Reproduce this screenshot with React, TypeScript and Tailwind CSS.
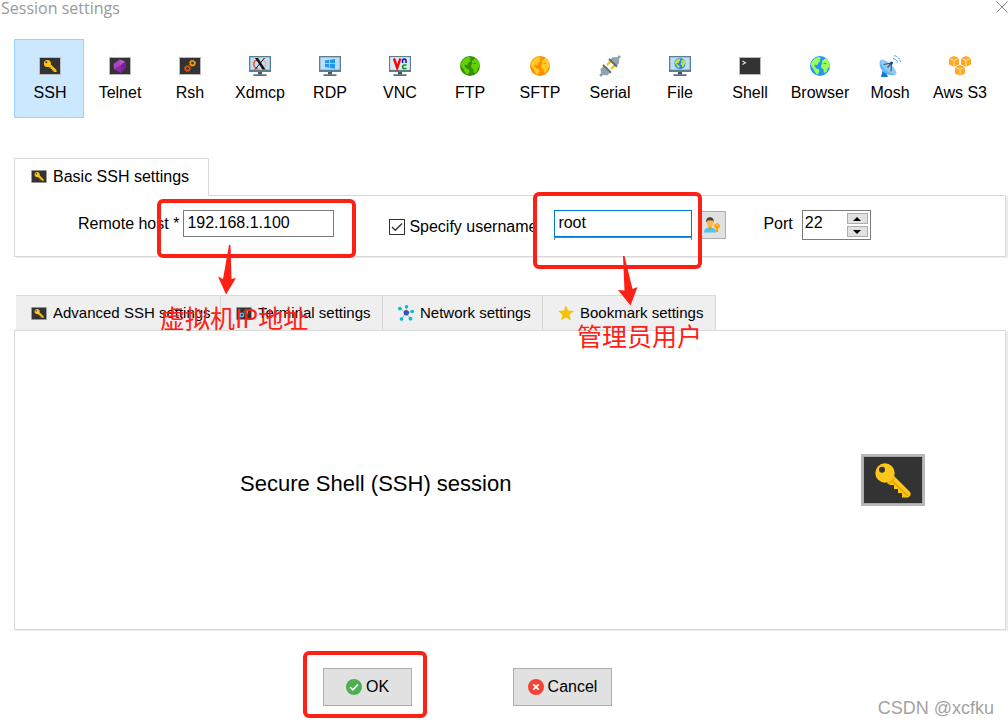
import { useState } from 'react';
import type { ReactNode } from 'react';
import { clsx } from 'clsx';

function Screen({ children, className }: { children?: ReactNode; className?: string }) {
  return (
    <svg viewBox="0 0 22 18" className={clsx('shrink-0', className)} aria-hidden="true">
      <rect width="22" height="18" fill="#b9b9b9" />
      <rect x="1" y="1" width="20" height="16" fill="#333" />
      {children}
    </svg>
  );
}

function KeyIcon({ className }: { className?: string }) {
  return (
    <Screen className={className}>
      <path d="M9 9.200 11.400 7 17.500 13V15H14.600V13.500H13.100V12H11.600V10.600H10.200Z" fill="#ffc61a" />
      <path d="m10.600 8.400 5.800 5.600" stroke="#e8a200" strokeWidth=".6" />
      <circle cx="8.400" cy="6.400" r="3.500" fill="#ffc61a" />
      <circle cx="7.300" cy="5.300" r="1" fill="#333" />
    </Screen>
  );
}

function Gear({ x, y, color }: { x: number; y: number; color: string }) {
  return (
    <g stroke={color} fill="none">
      <circle cx={x} cy={y} r="2.1" strokeWidth="1.5" />
      <circle cx={x} cy={y} r="3.1" strokeWidth="1" strokeDasharray="1.3 1.13" />
    </g>
  );
}

function Monitor({ children }: { children: ReactNode }) {
  return (
    <svg viewBox="0 0 22 20" className="h-5 w-[22px]" aria-hidden="true">
      <path d="M0 0h22v16H0z" fill="#607d8b" />
      <path d="M1.3 1.3h19.4v12.4H1.3z" fill="#bbdefb" />
      <path d="M9 16h4v2.5H9z" fill="#455a64" />
      <path d="M4.5 18.3h13V20h-13z" fill="#546e7a" />
      {children}
    </svg>
  );
}

function GlobeShape({ sea, land }: { sea: string; land: string }) {
  return (
    <>
      <circle cx="10" cy="10" r="10" fill={sea} />
      <path
        d="M1 8C2 4.500 5 1.600 9 1L11 2 9.500 3.500 10.500 5 8.500 6.500 7.500 9 6 9.300 5 8 4.500 10.500 6.500 12.500 9 13.500 9.500 15.500 8 18 6.500 18.500 5 16 3.500 13 1.300 10.500Z"
        fill={land}
      />
      <path
        d="M12.500 4.500 14.500 3 15.800 2.300C18 3.800 19.600 6.500 19.800 9.200L19.500 12 17.800 11.500 17.500 14 15.500 17 13.800 16.500 13.500 13.200 11.500 12 11 9.500 12.500 7.500 11.700 6Z"
        fill={land}
      />
      <path d="m13 7.500 2-.8 1.500.8-1.500.7Z" fill={sea} />
    </>
  );
}

function Globe({ sea, land }: { sea: string; land: string }) {
  return (
    <svg viewBox="0 0 20 20" className="size-5" aria-hidden="true">
      <GlobeShape sea={sea} land={land} />
    </svg>
  );
}

function SerialIcon() {
  return (
    <svg viewBox="0 0 22 22" className="size-[22px]" aria-hidden="true">
      <path d="m8 10 4-4M12 14l4-4" stroke="#ffb300" strokeWidth="1.8" />
      <path d="m11 4.500 3-2.500 4 .2L20 0l2 1.800-2 2.200.2 4L17.500 11Z" fill="#90a4ae" />
      <path d="m4 11.500 6.800 6.500L8 20.500l-4-.5L2 22 .2 20.300 2 18 1.500 14Z" fill="#90a4ae" />
      <path d="m10 4 8 7.800M4 10l8 7.800" stroke="#546e7a" strokeWidth="2" />
    </svg>
  );
}

function DishIcon() {
  return (
    <svg viewBox="0 0 22 22" className="size-[22px]" aria-hidden="true">
      <path d="m3.500 16-1.500 6h7l-2-5Z" fill="#1976d2" />
      <path d="M1.500 5C-.5 8.500 1 14 4.500 17s9 4.500 12.500 2Z" fill="#64b5f6" />
      <path d="M1.500 5c2-1.500 7 1 10.500 4.500S18.500 17.500 17 19C14 20 9 17.500 6 14.500S.5 7.500 1.500 5Z" fill="#90caf9" />
      <path d="m4.500 9.500 8-1.500-.5 8.500M12.500 8 8.500 12.500" stroke="#455a64" strokeWidth="1.200" fill="none" />
      <circle cx="12.500" cy="8" r="1.500" fill="#0d47a1" />
      <path
        d="M14 3.500c2.500.3 4.300 2 4.500 4.500M15 .7c3.500.3 6.200 3 6.500 6.500"
        stroke="#42a5f5"
        strokeWidth="1"
        fill="none"
        strokeDasharray="3 .7"
      />
    </svg>
  );
}

function Cube({ x, y }: { x: number; y: number }) {
  return (
    <g transform={`translate(${x} ${y})`}>
      <path d="m5 0 5 2v6.500L5 10.800 0 8.500V2Z" fill="#ffa726" />
      <path d="m0 2.300 5 2 5-2M5 4.300v6" stroke="#fff3d6" strokeWidth=".8" fill="none" />
    </g>
  );
}

type Protocol = { name: string; icon: ReactNode };

const protocols: Protocol[] = [
  { name: 'SSH', icon: <KeyIcon className="h-[18px] w-[22px]" /> },
  {
    name: 'Telnet',
    icon: (
      <Screen className="h-[18px] w-[22px]">
        <path d="m10.500 2.500 5.500 2 1.200 5-5.200 6.300L5 12 4.500 7Z" fill="#ab47bc" />
        <path d="m10.500 2.500 5.500 2-4.500 3.700Z" fill="#ba55cc" />
        <path d="m11.500 8.200 4.500-3.700 1.200 5-5.200 6.300Z" fill="#7b1fa2" />
        <path d="M5 12l6.500-3.800.5 7.600Z" fill="#8e24aa" />
      </Screen>
    ),
  },
  {
    name: 'Rsh',
    icon: (
      <Screen className="h-[18px] w-[22px]">
        <Gear x={8.5} y={11.5} color="#e65100" />
        <Gear x={13.5} y={6.2} color="#ff9800" />
      </Screen>
    ),
  },
  {
    name: 'Xdmcp',
    icon: (
      <Monitor>
        <path d="M8 4C3.500 5.500 3.500 12 9 12.800" stroke="#ff5722" strokeWidth="1.500" fill="none" />
        <path d="M14.500 4.500C18.500 6.500 17.500 12 11.500 13" stroke="#ffab91" strokeWidth="1.500" fill="none" />
        <path d="M6 2h3L16.500 13.500h-3Z" fill="#111" />
        <path d="M15.500 2 6 13.500" stroke="#111" strokeWidth="1" />
      </Monitor>
    ),
  },
  {
    name: 'RDP',
    icon: (
      <Monitor>
        <path d="m6 4.500 4-.7v3.500H6ZM10.700 3.700 16 3v4.300h-5.300ZM6 8h4v3.800l-4-.7ZM10.700 8H16v4.700l-5.300-.8Z" fill="#2196f3" />
      </Monitor>
    ),
  },
  {
    name: 'VNC',
    icon: (
      <Monitor>
        <path d="M1.300 1.300h19.400v12.400H1.300z" fill="#dcebfa" />
        <path d="M5 2.500 8.200 12 11.300 2.500" stroke="#f00" strokeWidth="2.400" fill="none" />
        <path d="M13.500 7V5q0-2 1.800-2T17 5v2" stroke="#00e" strokeWidth="1.500" fill="none" />
        <path d="M17.500 9h-2q-2 0-2 1.800t2 1.800h2" stroke="#090" strokeWidth="1.500" fill="none" />
      </Monitor>
    ),
  },
  { name: 'FTP', icon: <Globe sea="#388e00" land="#5fd400" /> },
  { name: 'SFTP', icon: <Globe sea="#ff8f00" land="#ffca28" /> },
  { name: 'Serial', icon: <SerialIcon /> },
  {
    name: 'File',
    icon: (
      <Monitor>
        <g transform="translate(5.500 2) scale(.55)">
          <GlobeShape sea="#1e88e5" land="#cddc39" />
        </g>
      </Monitor>
    ),
  },
  {
    name: 'Shell',
    icon: (
      <Screen className="h-[18px] w-[22px]">
        <path d="m3.500 4 3 1.800-3 1.800" stroke="#ddd" strokeWidth="1.200" fill="none" />
      </Screen>
    ),
  },
  { name: 'Browser', icon: <Globe sea="#2196f3" land="#9cff57" /> },
  { name: 'Mosh', icon: <DishIcon /> },
  {
    name: 'Aws S3',
    icon: (
      <svg viewBox="0 0 22 20" className="h-5 w-[22px]" aria-hidden="true">
        <Cube x={0} y={0} />
        <Cube x={12} y={0} />
        <Cube x={6} y={9} />
      </svg>
    ),
  },
];

function TerminalIcon() {
  return (
    <Screen className="h-[13px] w-4">
      <g stroke="#64b5f6" fill="none">
        <circle cx="8" cy="11" r="2.500" strokeWidth="2" />
        <circle cx="14" cy="7" r="2" strokeWidth="1.500" />
      </g>
    </Screen>
  );
}

function NetworkIcon() {
  return (
    <svg viewBox="0 0 16 16" className="size-4" aria-hidden="true">
      <path d="M8 8 2 3.500M8 8l.5-6M8 8l6-1.500M8 8l4 5.500M8 8l-4.500 6" stroke="#b0bec5" strokeWidth="1" />
      <circle cx="8.300" cy="7.800" r="2.700" fill="#3f51b5" />
      <g fill="#00bcd4">
        <circle cx="1.900" cy="3.600" r="1.900" />
        <circle cx="8.500" cy="1.800" r="1.800" />
        <circle cx="14.200" cy="6.500" r="1.800" />
        <circle cx="12.500" cy="13.700" r="1.900" />
        <circle cx="3.500" cy="14.100" r="1.800" />
      </g>
    </svg>
  );
}

function StarIcon() {
  return (
    <svg viewBox="0 0 16 16" className="size-4" aria-hidden="true">
      <path d="m8 .3 2.200 5.200 5.600.5-4.200 3.800 1.300 5.600L8 12.400l-4.900 3 1.300-5.600L.2 6l5.600-.5Z" fill="#f4c20d" />
    </svg>
  );
}

function UserKeyIcon() {
  return (
    <svg viewBox="0 0 16 16" className="size-4" aria-hidden="true">
      <path d="M0 15.500C0 12 2.500 10.700 6 10.500s6 1.500 6 5Z" fill="#4fc3f7" />
      <path d="M4.500 8.500h3v2.700L6 12.500l-1.500-1.300Z" fill="#ff9800" />
      <ellipse cx="6" cy="5.500" rx="3.100" ry="4.300" fill="#ffb74d" />
      <path d="M2.300 5.500C1.800 1.800 3.500.3 6 .3S10.200 1.800 9.700 5.500L8.800 3.500 4 3.200Z" fill="#424242" />
      <circle cx="13" cy="9" r="2.800" fill="#ffa000" />
      <path d="M12 10.500h2V15h-2z" fill="#ffa000" />
      <path d="M12.300 7.500h1.500v1h-1.500z" fill="#fff3e0" />
    </svg>
  );
}

const settingTabs = [
  { label: 'Advanced SSH settings', icon: <KeyIcon className="h-[13px] w-4" /> },
  { label: 'Terminal settings', icon: <TerminalIcon /> },
  { label: 'Network settings', icon: <NetworkIcon /> },
  { label: 'Bookmark settings', icon: <StarIcon /> },
];

function Highlight({ className }: { className: string }) {
  return <span className={clsx('pointer-events-none absolute z-10 rounded-md border-4 border-[#ff2015]', className)} />;
}

function Note({ className, children }: { className: string; children: ReactNode }) {
  return (
    <p
      className={clsx(
        "pointer-events-none absolute z-10 font-['Noto_Sans_CJK_SC',sans-serif] text-[25px] leading-7 whitespace-nowrap text-[#ff2015]",
        className,
      )}
    >
      {children}
    </p>
  );
}

export default function App() {
  const [protocol, setProtocol] = useState('SSH');
  const [host, setHost] = useState('192.168.1.100');
  const [useName, setUseName] = useState(true);
  const [username, setUsername] = useState('root');
  const [port, setPort] = useState(22);

  return (
    <main className="relative min-h-screen overflow-hidden bg-white pb-[18px] font-['Liberation_Sans',Arial,sans-serif] text-base text-black">
      <header className="flex h-[39px] items-start justify-between">
        <h1 className="pl-px font-['Open_Sans',sans-serif] text-base leading-4 text-[#999]">Session settings</h1>
        <button type="button" aria-label="Close" className="mt-px">
          <svg viewBox="0 0 12 12" className="size-3" aria-hidden="true">
            <path d="m.5.5 11 11M11.500.5l-11 11" stroke="#888" strokeWidth="1" />
          </svg>
        </button>
      </header>

      <nav className="grid grid-cols-14 px-3.5">
        {protocols.map(({ name, icon }) => (
          <button
            key={name}
            type="button"
            aria-pressed={protocol === name}
            onClick={() => setProtocol(name)}
            className={clsx(
              'flex flex-col items-center border pt-4 pb-3 pl-0.5',
              protocol === name ? 'border-[#99d1ff] bg-[#cce8ff]' : 'border-transparent',
            )}
          >
            <span className="flex h-5 items-center justify-center">{icon}</span>
            <span className="mt-[5px] leading-6 whitespace-nowrap">{name}</span>
          </button>
        ))}
      </nav>

      <section className="mt-10 mr-0.5 ml-3.5">
        <h2 className="relative z-1 -mb-px flex h-[38px] w-fit items-center gap-1.5 border border-b-0 border-[#d9d9d9] bg-white pr-[19px] pb-0.5 pl-4">
          <KeyIcon className="h-[13px] w-4" />
          Basic SSH settings
        </h2>
        <div className="flex items-start border border-[#d9d9d9] pt-3.5 pb-3 pl-[63px] shadow-[2px_1px_0_#ececec]">
          <div className="relative flex items-center gap-1">
            <label htmlFor="host" className="whitespace-nowrap">
              Remote host *
            </label>
            <input
              id="host"
              value={host}
              onChange={(e) => setHost(e.target.value)}
              className="h-[27px] w-[151px] border border-[#7a7a7a] bg-white px-[3px] pb-0.5 outline-none"
            />
            <Highlight className="-top-[11px] -right-[22px] h-[59px] w-[199px]" />
          </div>

          <label className="ml-[55px] flex h-[34px] w-[165px] items-center gap-1 whitespace-nowrap">
            <span className="relative flex size-4">
              <input
                type="checkbox"
                checked={useName}
                onChange={(e) => setUseName(e.target.checked)}
                className="size-4 appearance-none border border-[#333] bg-white"
              />
              {useName && (
                <svg viewBox="0 0 16 16" className="pointer-events-none absolute inset-0" aria-hidden="true">
                  <path d="m3 8 3.300 3.300L13 4.500" stroke="#333" strokeWidth="1.300" fill="none" />
                </svg>
              )}
            </span>
            Specify username
          </label>

          <div className="relative w-[138px]">
            <input
              aria-label="Username"
              value={username}
              disabled={!useName}
              onChange={(e) => setUsername(e.target.value)}
              className="block h-[27px] w-full border border-[#0078d7] bg-white px-[3px] pb-0.5 outline-none"
            />
            <div className="h-[3px] border-x border-t border-[#7a7a7a]" />
            <Highlight className="-top-[18px] -left-[21px] h-[77px] w-[169px]" />
          </div>
          <button
            type="button"
            aria-label="Choose user"
            className="mt-px ml-1.5 flex size-7 items-center justify-center border border-[#adadad] bg-[#e1e1e1]"
          >
            <UserKeyIcon />
          </button>

          <label htmlFor="port" className="ml-[37px] leading-[27px]">
            Port
          </label>
          <div className="ml-[9px] flex h-[30px] w-[69px] border border-[#7a7a7a]">
            <input
              id="port"
              value={port}
              onChange={(e) => setPort(Number(e.target.value) || 0)}
              className="h-6 w-11 bg-white pl-0.5 outline-none"
            />
            <div className="flex flex-col gap-0.5 pt-0.5">
              <button
                type="button"
                aria-label="Increase port"
                onClick={() => setPort(port + 1)}
                className="flex h-[11px] w-[21px] items-center justify-center border border-[#adadad] bg-[#e1e1e1]"
              >
                <svg viewBox="0 0 8 4" className="h-1 w-2" aria-hidden="true">
                  <path d="M0 4 4 0l4 4Z" />
                </svg>
              </button>
              <button
                type="button"
                aria-label="Decrease port"
                onClick={() => setPort(port - 1)}
                className="flex h-[11px] w-[21px] items-center justify-center border border-[#adadad] bg-[#e1e1e1]"
              >
                <svg viewBox="0 0 8 4" className="h-1 w-2" aria-hidden="true">
                  <path d="m0 0 4 4 4-4Z" />
                </svg>
              </button>
            </div>
          </div>
        </div>
      </section>

      <section className="mt-[38px] mr-0.5 ml-3.5">
        <div className="ml-0.5 grid w-fit grid-cols-[205px_162px_160px_173px]">
          {settingTabs.map(({ label, icon }) => (
            <button
              key={label}
              type="button"
              className="flex h-[35px] items-center gap-1.5 border-t border-r border-[#d9d9d9] bg-[#efefef] pl-[15px] text-[15px] whitespace-nowrap"
            >
              {icon}
              {label}
            </button>
          ))}
        </div>
        <div className="flex items-center justify-between border border-[#d9d9d9] py-[123px] pr-20 pl-[225px] shadow-[2px_1px_0_#ececec]">
          <p className="self-end text-[22px] leading-11">Secure Shell (SSH) session</p>
          <svg viewBox="0 0 64 52" className="h-[52px] w-16" aria-hidden="true">
            <path d="M0 0h64v52H0z" fill="#b9b9b9" />
            <path d="M2.500 2.500h59v47h-59z" fill="#999" />
            <path d="M3 3h58v46H3z" fill="#333" />
            <path d="m26 29 7-7 16 16c1.500 2 .5 4.500-2 5.500h-6V39h-4v-4h-4v-4h-4Z" fill="#ffc61a" />
            <path d="m30 26 17 16" stroke="#e5a000" strokeWidth="1.500" />
            <path d="M26 28.500c3-.5 5.500-3 6-6l2 2c-1 2.500-3 4.500-6 6Z" fill="#f0ad00" />
            <circle cx="24" cy="19" r="9.700" fill="#ffc61a" />
            <circle cx="21" cy="15.800" r="3" fill="#333" />
          </svg>
        </div>
      </section>

      <footer className="mt-[38px] flex gap-[101px] pl-[323px]">
        <div className="relative">
          <button
            type="button"
            className="flex h-[38px] w-[89px] items-center justify-center gap-1 border border-[#adadad] bg-[#e1e1e1]"
          >
            <svg viewBox="0 0 16 16" className="size-4" aria-hidden="true">
              <circle cx="8" cy="8" r="8" fill="#4caf50" />
              <path d="m4 8 2.800 2.800L12 5.500" stroke="#fff" strokeWidth="1.700" fill="none" />
            </svg>
            OK
          </button>
          <Highlight className="-top-[17px] -left-5 h-[67px] w-[124px]" />
        </div>
        <button
          type="button"
          className="flex h-[38px] w-[99px] items-center justify-center gap-1 border border-[#adadad] bg-[#e1e1e1]"
        >
          <svg viewBox="0 0 16 16" className="size-4" aria-hidden="true">
            <circle cx="8" cy="8" r="8" fill="#f44336" />
            <path d="m5.300 5.300 5.400 5.400M10.700 5.300l-5.400 5.400" stroke="#fff" strokeWidth="1.800" />
          </svg>
          Cancel
        </button>
      </footer>

      <svg viewBox="0 0 20 50" className="pointer-events-none absolute top-[245px] left-[217px] z-10 h-[50px] w-5" aria-hidden="true">
        <path d="M12 0h1.500L14.500 34 19 33 9 49.500 1 31.500 6 34Z" fill="#ff2015" />
      </svg>
      <svg viewBox="0 0 20 50" className="pointer-events-none absolute top-[256px] left-[618px] z-10 h-[50px] w-5" aria-hidden="true">
        <path d="M5 0h1.500L14.500 33 19.500 31 12.500 49.500 0 34 6.500 34.500Z" fill="#ff2015" />
      </svg>
      <Note className="top-[303px] left-40">虚拟机IP地址</Note>
      <Note className="top-[321px] left-[577px]">管理员用户</Note>
      <p className="absolute right-3.5 bottom-1 text-lg leading-6 text-[#a3a3a3]">CSDN @xcfku</p>
    </main>
  );
}
